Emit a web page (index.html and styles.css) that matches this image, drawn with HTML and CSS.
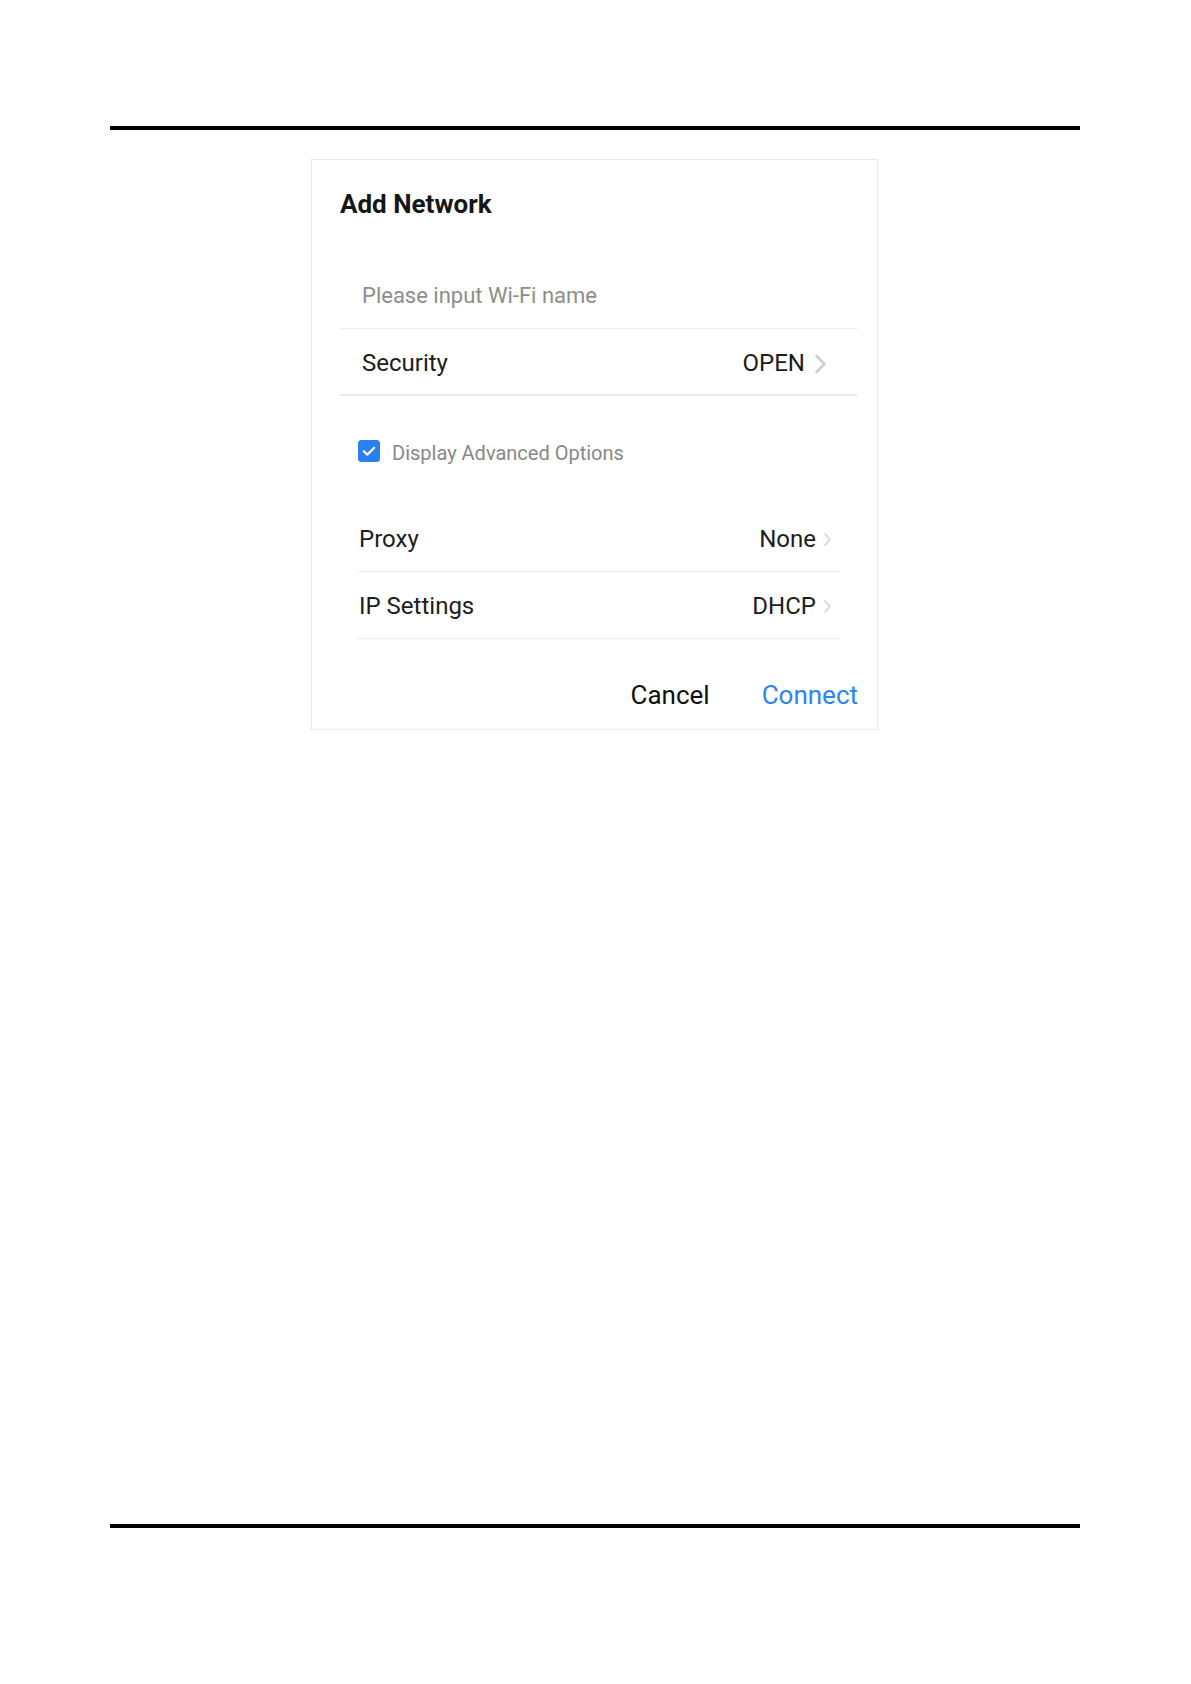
FILE: index.html
```html
<!DOCTYPE html>
<html lang="en">
<head>
<meta charset="utf-8">
<title>Add Network</title>
<link rel="stylesheet" href="styles.css">
</head>
<body>
<div class="page">
  <div class="rule rule-top"></div>
  <div class="dialog">
    <h1 class="title">Add Network</h1>
    <div class="group group-main">
      <div class="row row-input"><span class="placeholder">Please input Wi-Fi name</span></div>
      <div class="row row-security">
        <span class="label">Security</span>
        <span class="value">OPEN
          <svg class="chev chev-lg" width="13" height="20" viewBox="0 0 13 20"><path d="M2.5 2 L10.5 10 L2.5 18" fill="none" stroke="#cfcfcf" stroke-width="2.6" stroke-linecap="round" stroke-linejoin="round"/></svg>
        </span>
      </div>
    </div>
    <div class="advanced">
      <span class="checkbox">
        <svg width="22" height="22" viewBox="0 0 22 22"><rect width="22" height="22" rx="3.5" fill="#2a7ff1"/><path d="M5.8 11.2 L9.3 14.6 L16.2 7.8" fill="none" stroke="#fff" stroke-width="2.2" stroke-linecap="round" stroke-linejoin="round"/></svg>
      </span>
      <span class="adv-text">Display Advanced Options</span>
    </div>
    <div class="group group-adv">
      <div class="row row-sub">
        <span class="label">Proxy</span>
        <span class="value">None
          <svg class="chev chev-sm" width="9" height="15" viewBox="0 0 9 15"><path d="M2 2 L7 7.5 L2 13" fill="none" stroke="#d6d6d6" stroke-width="1.8" stroke-linecap="round" stroke-linejoin="round"/></svg>
        </span>
      </div>
      <div class="row row-sub">
        <span class="label">IP Settings</span>
        <span class="value">DHCP
          <svg class="chev chev-sm" width="9" height="15" viewBox="0 0 9 15"><path d="M2 2 L7 7.5 L2 13" fill="none" stroke="#d6d6d6" stroke-width="1.8" stroke-linecap="round" stroke-linejoin="round"/></svg>
        </span>
      </div>
    </div>
    <div class="actions">
      <span class="btn btn-cancel">Cancel</span>
      <span class="btn btn-connect">Connect</span>
    </div>
  </div>
  <div class="spacer"></div>
  <div class="rule rule-bottom"></div>
</div>
</body>
</html>
```

FILE: styles.css
```css
html, body {
  margin: 0;
  padding: 0;
  background: #ffffff;
}

body {
  font-family: Roboto, "Liberation Sans", Arial, sans-serif;
  color: #1c1c1c;
}

.page {
  width: 970px;
  margin-left: 110px;
  padding-top: 126px;
  height: 1558px;
  display: flex;
  flex-direction: column;
}

.rule {
  height: 4px;
  background: #000;
  width: 970px;
  flex: none;
}

.spacer {
  height: 794px;
  flex: none;
}

.dialog {
  margin-top: 29px;
  margin-left: 201px;
  width: 567px;
  box-sizing: border-box;
  border: 1px solid #e9e9e9;
  padding: 29px 19px 14px 28px;
  display: flex;
  flex-direction: column;
}

.title {
  margin: 0;
  font-size: 26px;
  line-height: 30px;
  font-weight: 700;
  color: #161616;
}

.group-main {
  margin-top: 43px;
  margin-right: 1px;
  display: flex;
  flex-direction: column;
}

.row {
  display: flex;
  justify-content: space-between;
  align-items: center;
}

.row-input {
  padding-top: 2px;
  height: 64px;
  line-height: 64px;
  padding-left: 22px;
  border-bottom: 1px solid #ededed;
}

.placeholder {
  font-size: 22px;
  color: #8d8d8d;
}

.row-security {
  padding: 4px 30px 0 22px;
  height: 61px;
  line-height: 61px;
  border-bottom: 2px solid #e9e9e9;
  font-size: 24px;
}

.value {
  display: flex;
  align-items: center;
}

.chev {
  display: block;
  flex: none;
}

.chev-lg {
  margin-left: 9px;
}

.chev-sm {
  margin-left: 7px;
}

.advanced {
  margin-top: 44px;
  margin-left: 18px;
  display: flex;
  align-items: flex-start;
  height: 22px;
}

.checkbox {
  width: 22px;
  height: 22px;
  flex: none;
}

.checkbox svg {
  display: block;
}

.adv-text {
  margin-left: 12px;
  margin-top: 2px;
  font-size: 20px;
  line-height: 22px;
  color: #888888;
}

.group-adv {
  margin-top: 43px;
  margin-left: 18px;
  margin-right: 18px;
  display: flex;
  flex-direction: column;
}

.row-sub {
  padding: 3px 8px 0 1px;
  height: 63px;
  line-height: 63px;
  border-bottom: 1px solid #ebebeb;
  font-size: 24px;
}

.actions {
  margin-top: 36px;
  display: flex;
  justify-content: flex-end;
  gap: 52px;
  height: 40px;
  line-height: 40px;
  font-size: 26px;
}

.btn-cancel {
  color: #111111;
}

.btn-connect {
  color: #2a86f0;
}
```
